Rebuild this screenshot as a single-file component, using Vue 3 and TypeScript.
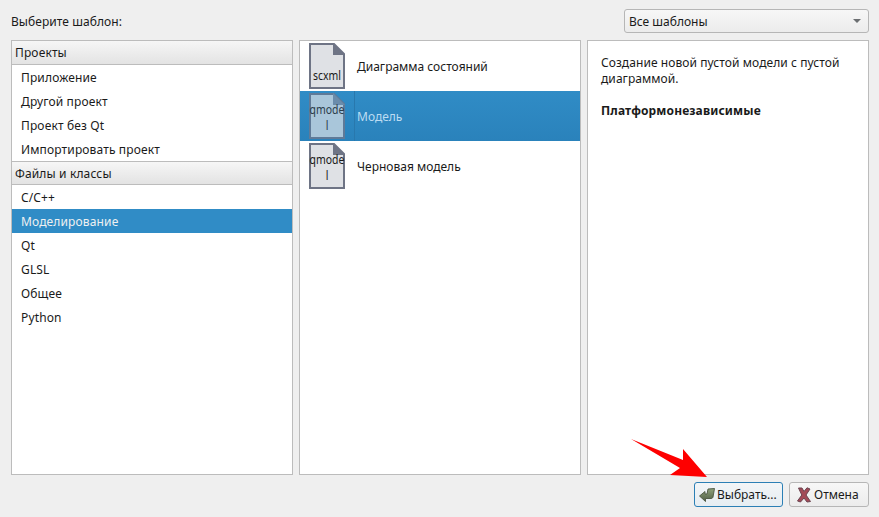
<template>
  <div class="dialog">
    <div class="top-row">
      <span class="choose-label">Выберите шаблон:</span>
      <div class="combo">
        <span>Все шаблоны</span>
        <i class="combo-arrow"></i>
      </div>
    </div>

    <div class="panels">
      <div class="panel categories">
        <template v-for="group in groups" :key="group.title">
          <div class="group-header">{{ group.title }}</div>
          <div
            v-for="item in group.items"
            :key="item"
            class="category"
            :class="{ selected: item === 'Моделирование' }"
          >
            {{ item }}
          </div>
        </template>
      </div>

      <div class="panel">
        <div
          v-for="tpl in templates"
          :key="tpl.name"
          class="template"
          :class="{ selected: tpl.selected }"
        >
          <div class="file-icon">
            <svg class="file-shape" width="36" height="46" viewBox="0 0 36 46">
              <path class="file-body" d="M1 1H25L35 11V45H1Z" stroke-width="2" />
              <path class="file-fold" d="M24 0 36 12H24Z" />
            </svg>
            <span class="file-ext">{{ tpl.ext }}</span>
          </div>
          <span class="template-name">{{ tpl.name }}</span>
        </div>
      </div>

      <div class="panel description">
        <p>Создание новой пустой модели с пустой диаграммой.</p>
        <p class="platform">Платформонезависимые</p>
      </div>
    </div>

    <div class="buttons">
      <button class="btn primary">
        <svg width="16" height="16" viewBox="0 0 16 16">
          <defs>
            <linearGradient id="okFill" x1="0" y1="0" x2="0" y2="1">
              <stop offset="0" stop-color="#8fa27c" />
              <stop offset="1" stop-color="#505e45" />
            </linearGradient>
          </defs>
          <path d="M.5 9 6 4.5V7H8L9 2 15.5 1.5 14 10C13.7 11 13 11.5 12 11.5H6.5V14.5Z" fill="url(#okFill)" stroke="#4a5540" stroke-width=".9" stroke-linejoin="round" />
        </svg>
        <span>Выбрать...</span>
      </button>
      <button class="btn cancel">
        <svg width="14" height="16" viewBox="0 0 14 16">
          <path d="M1.5 1H5L7 4.5 10 .8 13 2 9 8 13.5 14.5 10 15 7 11 3.5 15 .5 14 4.8 8Z" fill="#a34a57" stroke="#6b4450" stroke-width="1" stroke-linejoin="round" />
        </svg>
        <span>Отмена</span>
      </button>
    </div>

    <svg class="red-arrow" width="80" height="42" viewBox="0 0 80 42">
      <path d="M1 1 53 22 53 11 77 39 40 37 50 30Z" fill="#fe0000" />
    </svg>
  </div>
</template>

<script setup lang="ts">
interface Group {
  title: string;
  items: string[];
}

interface TemplateItem {
  name: string;
  ext: string;
  selected?: boolean;
}

const groups: Group[] = [
  { title: "Проекты", items: ["Приложение", "Другой проект", "Проект без Qt", "Импортировать проект"] },
  { title: "Файлы и классы", items: ["C/C++", "Моделирование", "Qt", "GLSL", "Общее", "Python"] },
];

const templates: TemplateItem[] = [
  { name: "Диаграмма состояний", ext: "scxml" },
  { name: "Модель", ext: "qmodel", selected: true },
  { name: "Черновая модель", ext: "qmodel" },
];
</script>

<style>
html,
body {
  margin: 0;
  background: #efefef;
}
</style>

<style scoped>
.dialog {
  position: relative;
  box-sizing: border-box;
  width: 879px;
  height: 517px;
  padding: 9px 10px 10px 11px;
  display: flex;
  flex-direction: column;
  background: #efefef;
  color: #1a1a1a;
  font-family: "Noto Sans", sans-serif;
  font-size: 12px;
  overflow: hidden;
}

.top-row {
  display: flex;
  justify-content: space-between;
  align-items: center;
  height: 24px;
}

.choose-label {
  letter-spacing: 0.06px;
}

.combo {
  box-sizing: border-box;
  width: 245px;
  height: 24px;
  padding: 0 5px 0 4px;
  display: flex;
  align-items: center;
  justify-content: space-between;
  border: 1px solid #b6b6b6;
  border-radius: 3px;
  background: linear-gradient(#f7f7f7, #ececec);
}

.combo-arrow {
  width: 0;
  height: 0;
  margin-right: 2px;
  border-left: 4px solid transparent;
  border-right: 4px solid transparent;
  border-top: 4px solid #6b6e71;
}

.panels {
  flex: 1;
  display: grid;
  grid-template-columns: repeat(3, 282px);
  gap: 6px;
  margin-top: 7px;
  min-height: 0;
}

.panel {
  box-sizing: border-box;
  border: 1px solid #bcbcbc;
  background: #fff;
}

.categories {
  letter-spacing: 0.14px;
}

.group-header {
  box-sizing: border-box;
  height: 24px;
  padding-left: 3px;
  line-height: 24px;
  border-bottom: 1px solid #bcbcbc;
  background: linear-gradient(#f6f6f6, #e3e3e3);
}

.category {
  height: 24px;
  padding-left: 9px;
  line-height: 26px;
}

.category + .group-header {
  border-top: 1px solid #bcbcbc;
}

.category.selected {
  background: #308cc6;
  color: #eff0f1;
}

.template {
  height: 50px;
  display: flex;
  align-items: center;
  padding-left: 9px;
}

.template.selected {
  background: linear-gradient(#308cc6, #2a82bb);
  color: #bcdcf2;
}

.file-icon {
  position: relative;
  width: 36px;
  height: 46px;
  flex: none;
}

.file-shape {
  display: block;
}

.file-body {
  fill: #dfe1e5;
  stroke: #6e7485;
}

.file-fold {
  fill: #6e7485;
}

.selected .file-body {
  fill: #a9c6da;
  stroke: #5f7a98;
}

.selected .file-fold {
  fill: #6a8cab;
}

.file-ext {
  position: absolute;
  left: -3px;
  right: -3px;
  bottom: 5px;
  text-align: center;
  line-height: 16px;
  word-break: break-all;
  color: #1a1a1a;
  transform: scaleX(0.87);
}

.selected .file-ext {
  color: #2b3d4c;
}

.template-name {
  margin-left: 12px;
  align-self: stretch;
  display: flex;
  align-items: center;
}

.selected .template-name {
  margin-left: 9px;
  padding-left: 2px;
  border-left: 1px solid #2878ad;
}

.description {
  padding: 14px 13px;
  line-height: 16px;
  letter-spacing: 0.07px;
}

.description p {
  margin: 0;
}

.description .platform {
  margin-top: 16px;
  font-weight: 700;
  letter-spacing: 0.14px;
}

.buttons {
  display: flex;
  justify-content: flex-end;
  gap: 6px;
  margin-top: 7px;
}

.btn {
  box-sizing: border-box;
  height: 25px;
  display: flex;
  align-items: center;
  padding: 0 4px;
  gap: 2px;
  border: 1px solid #b6b6b6;
  border-radius: 3px;
  background: linear-gradient(#f7f7f7, #ececec);
  color: #1a1a1a;
  font: inherit;
}

.btn.primary {
  width: 89px;
  border-color: #2b7fb5;
  background: linear-gradient(#f2f5f7, #e6edf2);
}

.btn.cancel {
  width: 80px;
  padding-left: 7px;
  gap: 3px;
}

.red-arrow {
  position: absolute;
  left: 630px;
  top: 438px;
}
</style>
